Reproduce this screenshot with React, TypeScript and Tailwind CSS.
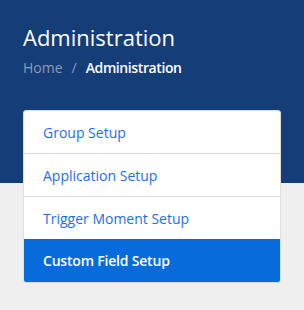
const items = ['Group Setup', 'Application Setup', 'Trigger Moment Setup', 'Custom Field Setup']

export default function App() {
  const active = 'Custom Field Setup'
  return (
    <div className="min-h-[310px] bg-[#efefef] font-['Open_Sans',sans-serif]">
      <div className="h-[183px] bg-[#153d77] px-[23px] pt-[22px]">
        <h1 className="text-[22px] leading-[30px] text-white">Administration</h1>
        <nav className="mt-[6px] flex items-center gap-[9px] text-[14px] leading-[20px]">
          <span className="text-[#8e9bb0]">Home</span>
          <span className="text-[#8e9bb0]">/</span>
          <span className="font-semibold tracking-[-0.4px] text-white">Administration</span>
        </nav>
      </div>
      <div className="-mt-[73px] mx-[23px] overflow-hidden rounded-[3px] border border-[#dcdcdc] bg-white">
        {items.map((item, i) => (
          <div
            key={item}
            className={
              item === active
                ? 'flex h-[43px] items-center bg-[#086bdb] px-[19px] text-[14px] font-semibold tracking-[-0.2px] text-white'
                : 'flex items-center px-[19px] text-[14px] text-[#1d6fe3] ' +
                  (i > 0 ? 'h-[43px] border-t border-[#dcdcdc]' : 'h-[42px]')
            }
          >
            {item}
          </div>
        ))}
      </div>
    </div>
  )
}
